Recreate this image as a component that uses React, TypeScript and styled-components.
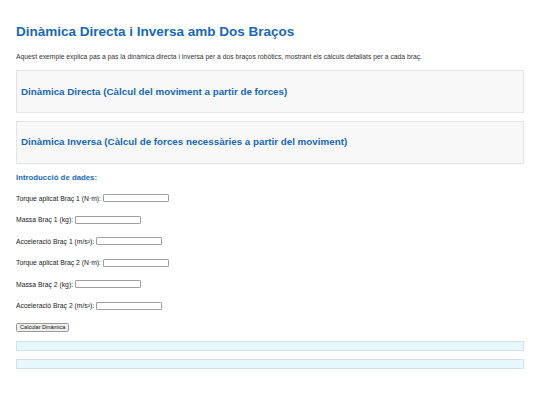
import styled, { createGlobalStyle } from "styled-components";

const GlobalStyle = createGlobalStyle`
  html, body {
    margin: 0;
    padding: 0;
    background: #fff;
  }
  body {
    font-family: "Liberation Sans", Arial, sans-serif;
    color: #222;
  }
`;

const Page = styled.div`
  padding: 24px 16px 0 16px;
`;

const Title = styled.h1`
  margin: 0;
  font-size: 13.5px;
  line-height: 16px;
  font-weight: bold;
  color: #1767b8;
`;

const Intro = styled.p`
  margin: 13px 0 0 0;
  font-size: 6.75px;
  line-height: 8px;
  color: #333;
`;

const Section = styled.div<{ $top: number }>`
  margin-top: ${(p) => p.$top}px;
  padding: 14.5px 4px 15.5px 4px;
  background: #f8f8f8;
  border: 1px solid #e4e4e4;
`;

const SectionTitle = styled.h2`
  margin: 0;
  font-size: 9.8px;
  line-height: 11px;
  font-weight: bold;
  color: #1767b8;
`;

const FormTitle = styled.h3`
  margin: 9.5px 0 0 0;
  font-size: 7.8px;
  line-height: 10px;
  font-weight: bold;
  color: #1767b8;
`;

const Fields = styled.div`
  margin-top: 10px;
  display: flex;
  flex-direction: column;
  gap: 11.5px;
`;

const Row = styled.label`
  display: flex;
  align-items: center;
  height: 10px;
  font-size: 6.8px;
  color: #222;
`;

const Input = styled.input`
  box-sizing: border-box;
  margin-left: 1.5px;
  width: 66px;
  height: 8px;
  padding: 0;
  border: 1px solid #a0a0a0;
  border-radius: 1px;
  background: #fff;
  font-size: 6px;
`;

const Button = styled.button`
  box-sizing: border-box;
  margin-top: 12.5px;
  height: 9px;
  padding: 0 3px;
  font-family: "Liberation Sans", Arial, sans-serif;
  font-size: 5.6px;
  line-height: 7px;
  color: #111;
  background: #efefef;
  border: 1px solid #999;
  border-radius: 1.5px;
  display: block;
`;

const Result = styled.div<{ $top: number }>`
  box-sizing: border-box;
  margin-top: ${(p) => p.$top}px;
  height: 10px;
  background: #e6f7fd;
  border: 1px solid #cfe2ea;
`;

const fields = [
  "Torque aplicat Braç 1 (N·m):",
  "Massa Braç 1 (kg):",
  "Acceleració Braç 1 (m/s²):",
  "Torque aplicat Braç 2 (N·m):",
  "Massa Braç 2 (kg):",
  "Acceleració Braç 2 (m/s²):",
];

export default function App() {
  return (
    <Page>
      <GlobalStyle />
      <Title>Dinàmica Directa i Inversa amb Dos Braços</Title>
      <Intro>
        Aquest exemple explica pas a pas la dinàmica directa i inversa per a dos
        braços robòtics, mostrant els càlculs detallats per a cada braç.
      </Intro>
      <Section $top={9}>
        <SectionTitle>Dinàmica Directa (Càlcul del moviment a partir de forces)</SectionTitle>
      </Section>
      <Section $top={7.5}>
        <SectionTitle>Dinàmica Inversa (Càlcul de forces necessàries a partir del moviment)</SectionTitle>
      </Section>
      <FormTitle>Introducció de dades:</FormTitle>
      <Fields>
        {fields.map((f) => (
          <Row key={f}>
            {f}
            <Input type="text" />
          </Row>
        ))}
      </Fields>
      <Button>Calcular Dinàmica</Button>
      <Result $top={8.5} />
      <Result $top={8} />
    </Page>
  );
}
